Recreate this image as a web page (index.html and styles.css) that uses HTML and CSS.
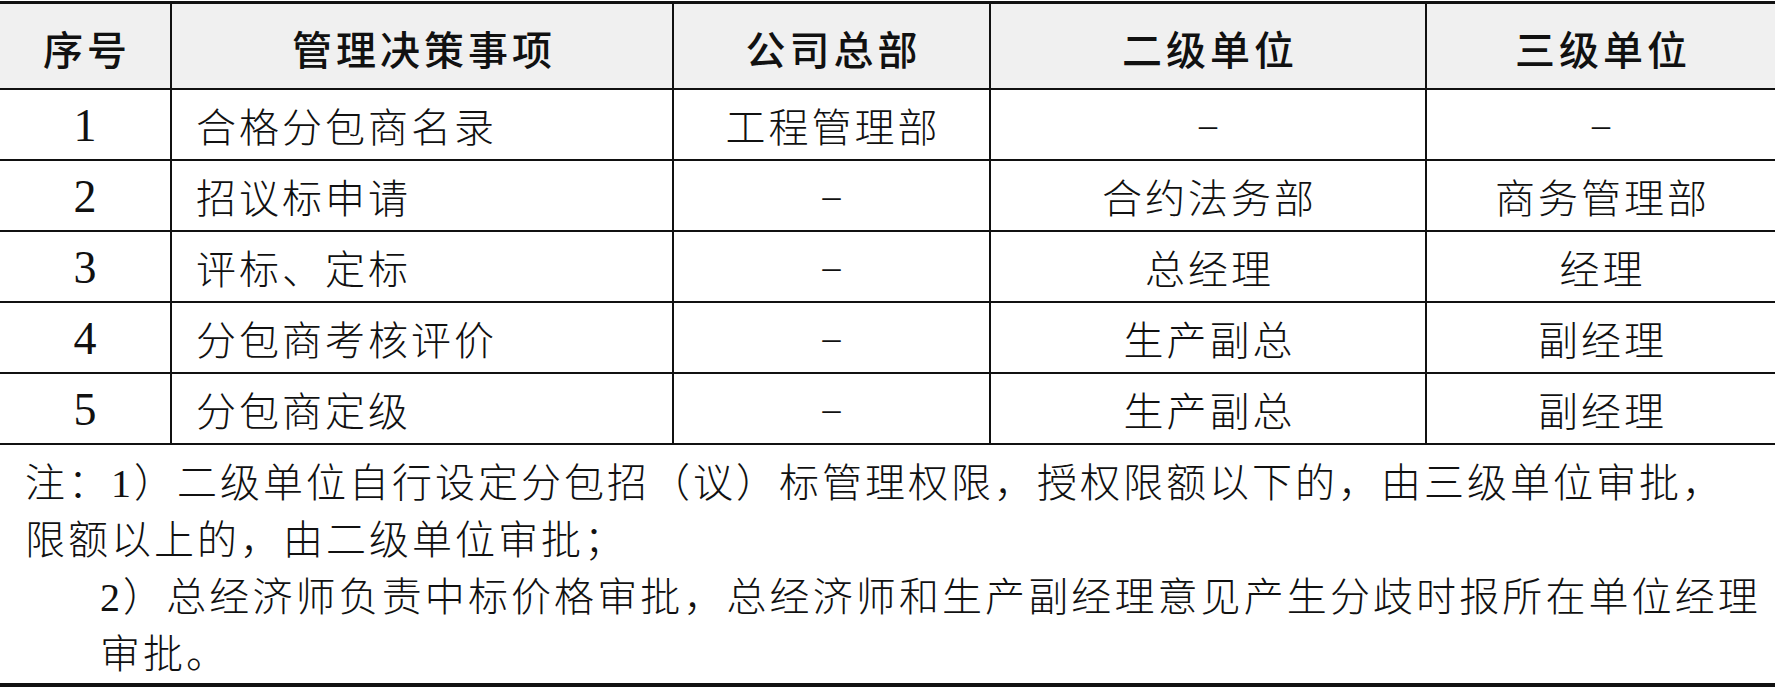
FILE: index.html
```html
<!DOCTYPE html>
<html lang="zh-CN">
<head>
<meta charset="utf-8">
<title>分包管理决策权限</title>
<link rel="stylesheet" href="styles.css">
</head>
<body>
<table class="decision-table">
  <colgroup>
    <col class="col-no">
    <col class="col-item">
    <col class="col-hq">
    <col class="col-second">
    <col class="col-third">
  </colgroup>
  <thead>
    <tr class="head-row">
      <th>序号</th>
      <th>管理决策事项</th>
      <th>公司总部</th>
      <th>二级单位</th>
      <th>三级单位</th>
    </tr>
  </thead>
  <tbody>
    <tr class="body-row">
      <td class="num">1</td>
      <td class="item">合格分包商名录</td>
      <td>工程管理部</td>
      <td class="dash">–</td>
      <td class="dash">–</td>
    </tr>
    <tr class="body-row">
      <td class="num">2</td>
      <td class="item">招议标申请</td>
      <td class="dash">–</td>
      <td>合约法务部</td>
      <td>商务管理部</td>
    </tr>
    <tr class="body-row">
      <td class="num">3</td>
      <td class="item">评标、定标</td>
      <td class="dash">–</td>
      <td>总经理</td>
      <td>经理</td>
    </tr>
    <tr class="body-row">
      <td class="num">4</td>
      <td class="item">分包商考核评价</td>
      <td class="dash">–</td>
      <td>生产副总</td>
      <td>副经理</td>
    </tr>
    <tr class="body-row">
      <td class="num">5</td>
      <td class="item">分包商定级</td>
      <td class="dash">–</td>
      <td>生产副总</td>
      <td>副经理</td>
    </tr>
    <tr class="note-row">
      <td colspan="5" class="note">
        <p class="note-line first">注：1）二级单位自行设定分包招（议）标管理权限，授权限额以下的，由三级单位审批，</p>
        <p class="note-line">限额以上的，由二级单位审批；</p>
        <p class="note-line indent wide">2）总经济师负责中标价格审批，总经济师和生产副经理意见产生分歧时报所在单位经理</p>
        <p class="note-line indent">审批。</p>
      </td>
    </tr>
  </tbody>
</table>
</body>
</html>
```
FILE: styles.css
```css
html, body {
  margin: 0;
  padding: 0;
  background: #ffffff;
}

body {
  padding-top: 1px;
  font-family: "Liberation Serif", "Noto Sans CJK SC", serif;
  font-weight: 300;
  color: #111111;
}

.decision-table {
  width: 1775px;
  border-collapse: collapse;
  table-layout: fixed;
  border-top: 3px solid #111111;
  border-bottom: 4px solid #111111;
}

.col-no { width: 171px; }
.col-item { width: 502px; }
.col-hq { width: 317px; }
.col-second { width: 436px; }
.col-third { width: 349px; }

.decision-table th,
.decision-table td {
  padding: 0;
  border-left: 2px solid #111111;
  border-bottom: 2px solid #111111;
  text-align: center;
  vertical-align: middle;
  white-space: nowrap;
}

.decision-table th:first-child,
.decision-table td:first-child {
  border-left: none;
}

.head-row {
  height: 86px;
  background: #f0f0f0;
}

.head-row th {
  font-family: "Noto Sans CJK SC", sans-serif;
  font-size: 40px;
  font-weight: 500;
  letter-spacing: 4px;
  padding-left: 4px;
  padding-top: 4px;
}

.body-row {
  height: 71px;
}

.body-row td {
  font-size: 40px;
  letter-spacing: 3px;
  padding-left: 3px;
  padding-top: 2px;
}

.body-row td.num {
  font-size: 46px;
  letter-spacing: 0;
  padding-left: 0;
}

.body-row td.item {
  text-align: left;
  padding-left: 24px;
}

.body-row td.dash {
  font-size: 36px;
}

.note-row td.note {
  text-align: left;
  vertical-align: top;
  padding: 10px 0 0 0;
  height: 228px;
  border-bottom: none;
}

.note-line {
  margin: 0;
  font-size: 40px;
  line-height: 57px;
  letter-spacing: 3px;
  padding-left: 25px;
  white-space: nowrap;
}

.note-line.indent {
  padding-left: 100px;
}

.note-line.wide {
  letter-spacing: 3.1px;
}
```
